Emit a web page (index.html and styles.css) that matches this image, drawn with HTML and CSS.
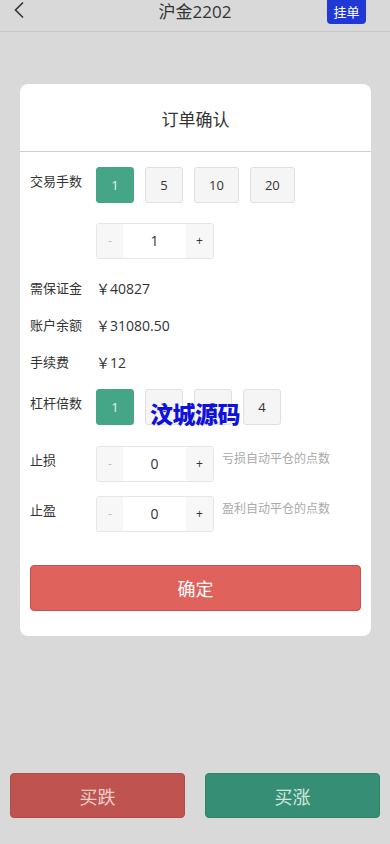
FILE: index.html
```html
<!DOCTYPE html>
<html lang="zh-CN">
<head>
<meta charset="utf-8">
<meta name="viewport" content="width=device-width, initial-scale=1">
<title>沪金2202</title>
<link rel="stylesheet" href="styles.css">
</head>
<body>
<div class="page">
  <header class="topbar">
    <span class="back">
      <svg width="12" height="18" viewBox="0 0 12 18"><path d="M10 1.5 L2.5 9 L10 16.5" fill="none" stroke="#333" stroke-width="1.6"/></svg>
    </span>
    <h1 class="title">沪金2202</h1>
    <span class="pending">挂单</span>
  </header>

  <main class="overlay">
    <section class="card">
      <div class="card-head">订单确认</div>
      <div class="card-body">
        <div class="row">
          <div class="label">交易手数</div>
          <div class="opts">
            <span class="opt active">1</span>
            <span class="opt">5</span>
            <span class="opt">10</span>
            <span class="opt">20</span>
          </div>
        </div>
        <div class="row row-stepper">
          <div class="label"></div>
          <div class="stepper">
            <span class="st-btn minus">-</span>
            <span class="st-val">1</span>
            <span class="st-btn plus">+</span>
          </div>
        </div>
        <div class="info-list">
          <div class="info"><span class="label">需保证金</span><span class="val">￥40827</span></div>
          <div class="info"><span class="label">账户余额</span><span class="val">￥31080.50</span></div>
          <div class="info"><span class="label">手续费</span><span class="val">￥12</span></div>
        </div>
        <div class="row row-lever">
          <div class="label">杠杆倍数</div>
          <div class="opts">
            <span class="opt active">1</span>
            <span class="opt">2</span>
            <span class="opt">3</span>
            <span class="opt">4</span>
            <span class="watermark">汶城源码</span>
          </div>
        </div>
        <div class="row row-loss">
          <div class="label">止损</div>
          <div class="stepper">
            <span class="st-btn minus">-</span>
            <span class="st-val">0</span>
            <span class="st-btn plus">+</span>
          </div>
          <span class="hint">亏损自动平仓的点数</span>
        </div>
        <div class="row row-profit">
          <div class="label">止盈</div>
          <div class="stepper">
            <span class="st-btn minus">-</span>
            <span class="st-val">0</span>
            <span class="st-btn plus">+</span>
          </div>
          <span class="hint">盈利自动平仓的点数</span>
        </div>
        <button class="confirm">确定</button>
      </div>
    </section>

    <div class="actions">
      <button class="act sell">买跌</button>
      <button class="act buy">买涨</button>
    </div>
  </main>
</div>
</body>
</html>
```

FILE: styles.css
```css
* { box-sizing: border-box; }
html, body { margin: 0; padding: 0; }
body {
  font-family: "Open Sans", "Noto Sans CJK SC", sans-serif;
  background: #d9d9d9;
  color: #333;
}
.page {
  display: flex;
  flex-direction: column;
  height: 844px;
}
.topbar {
  position: relative;
  height: 32px;
  border-bottom: 1px solid #c6c6c6;
  display: flex;
  align-items: flex-start;
  justify-content: center;
}
.back {
  position: absolute;
  left: 13px;
  top: 1px;
  display: flex;
}
.title {
  margin: 0;
  font-size: 17px;
  font-weight: 400;
  line-height: 24px;
  color: #333;
}
.pending {
  position: absolute;
  right: 24px;
  top: 0;
  width: 39px;
  height: 24px;
  border-radius: 0 0 4px 4px;
  background: #2039d6;
  color: #fff;
  font-size: 13px;
  line-height: 24px;
  text-align: center;
}
.overlay {
  flex: 1;
  display: flex;
  flex-direction: column;
  padding: 52px 0 26px;
}
.card {
  margin: 0 19px 0 20px;
  background: #fff;
  border-radius: 8px;
  height: 552px;
}
.card-head {
  height: 68px;
  border-bottom: 1px solid #cfcfcf;
  display: flex;
  align-items: center;
  justify-content: center;
  font-size: 17px;
  color: #333;
  padding-top: 1px;
}
.card-body {
  padding: 15px 10px 0;
  display: flex;
  flex-direction: column;
}
.row {
  display: flex;
  align-items: flex-start;
}
.label {
  width: 66px;
  flex: none;
  font-size: 13px;
  line-height: 20px;
  padding-top: 4px;
  color: #333;
}
.opts {
  position: relative;
  display: flex;
  gap: 11px;
}
.opt {
  height: 36px;
  padding: 0 14px;
  min-width: 38px;
  border: 1px solid #e0e0e0;
  border-radius: 3px;
  background: #f5f5f5;
  font-size: 13px;
  line-height: 34px;
  text-align: center;
  color: #333;
}
.opt.active {
  background: #44a587;
  border-color: #44a587;
  color: #e6f5ef;
}
.row-stepper { margin-top: 20px; }
.stepper {
  display: flex;
  width: 118px;
  height: 36px;
  border: 1px solid #e6e6e6;
  border-radius: 3px;
  overflow: hidden;
  flex: none;
}
.st-btn {
  background: #f7f7f7;
  font-size: 12px;
  line-height: 34px;
  text-align: center;
}
.minus { width: 26px; color: #bbb; }
.plus { width: 27px; color: #333; }
.st-val {
  flex: 1;
  background: #fff;
  font-size: 14px;
  line-height: 34px;
  text-align: center;
  color: #333;
}
.info-list {
  margin-top: 10px;
  display: flex;
  flex-direction: column;
}
.info {
  display: flex;
  align-items: center;
  height: 37px;
}
.info .label { padding-top: 0; }
.val { font-size: 14px; color: #333; }
.row-lever { margin-top: 9px; }
.watermark {
  position: absolute;
  left: 54px;
  top: 9px;
  font-family: "Noto Sans CJK SC", sans-serif;
  font-size: 23px;
  font-weight: 900;
  line-height: 30px;
  color: #1111dd;
  letter-spacing: -0.5px;
  text-shadow: 0 0 1px #fff, 0 0 1px #fff;
  white-space: nowrap;
}
.row-loss { margin-top: 21px; }
.row-profit { margin-top: 14px; }
.hint {
  margin-left: 8px;
  font-size: 12px;
  line-height: 20px;
  color: #aaa;
  padding-top: 3px;
}
.confirm {
  margin-top: 33px;
  height: 46px;
  width: 100%;
  border: 1px solid #c8524d;
  border-radius: 4px;
  background: #df625c;
  color: #fff;
  font-family: "Noto Sans CJK SC", sans-serif;
  font-size: 18px;
  padding: 0;
}
.actions {
  margin-top: auto;
  display: flex;
  justify-content: space-between;
  padding: 0 10px;
}
.act {
  width: 175px;
  height: 45px;
  border-radius: 4px;
  font-family: "Noto Sans CJK SC", sans-serif;
  font-size: 18px;
  padding: 0;
}
.sell {
  background: #bf534f;
  border: 1px solid #b34a46;
  color: #f0cfcd;
}
.buy {
  background: #368e75;
  border: 1px solid #2f8169;
  color: #cfe8df;
}
```
